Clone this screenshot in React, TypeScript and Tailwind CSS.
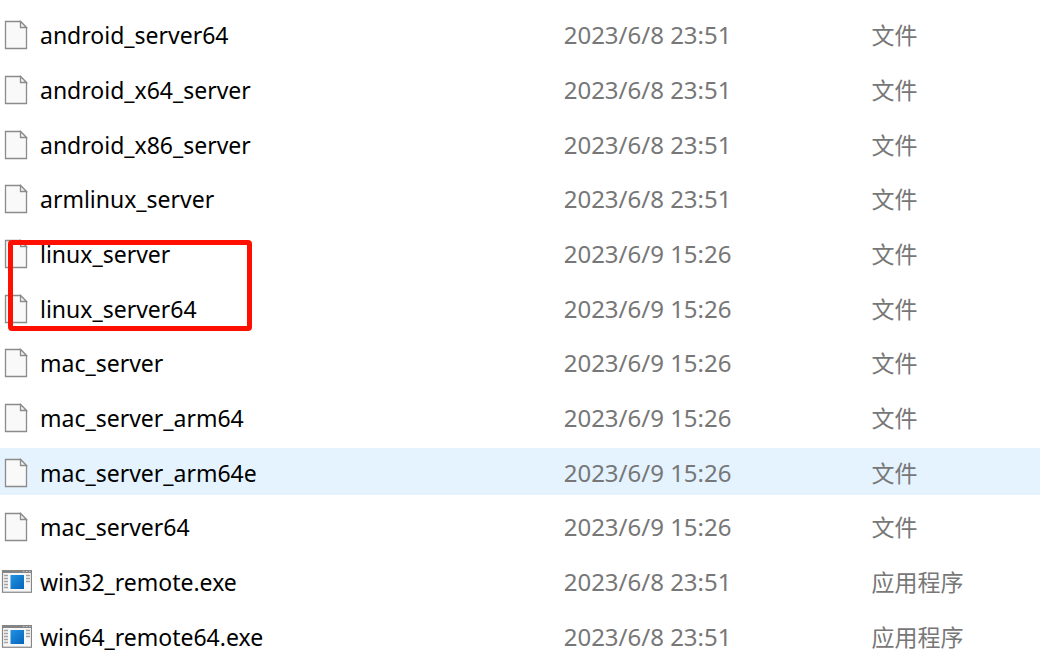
type Entry = {
  name: string;
  modified: string;
  kind: string;
  app?: boolean;
  active?: boolean;
  marked?: boolean;
};

const entries: Entry[] = [
  { name: "android_server64", modified: "2023/6/8 23:51", kind: "文件" },
  { name: "android_x64_server", modified: "2023/6/8 23:51", kind: "文件" },
  { name: "android_x86_server", modified: "2023/6/8 23:51", kind: "文件" },
  { name: "armlinux_server", modified: "2023/6/8 23:51", kind: "文件" },
  { name: "linux_server", modified: "2023/6/9 15:26", kind: "文件", marked: true },
  { name: "linux_server64", modified: "2023/6/9 15:26", kind: "文件" },
  { name: "mac_server", modified: "2023/6/9 15:26", kind: "文件" },
  { name: "mac_server_arm64", modified: "2023/6/9 15:26", kind: "文件" },
  { name: "mac_server_arm64e", modified: "2023/6/9 15:26", kind: "文件", active: true },
  { name: "mac_server64", modified: "2023/6/9 15:26", kind: "文件" },
  { name: "win32_remote.exe", modified: "2023/6/8 23:51", kind: "应用程序", app: true },
  { name: "win64_remote64.exe", modified: "2023/6/8 23:51", kind: "应用程序", app: true },
];

function FileIcon() {
  return (
    <svg width="32" height="30" viewBox="0 0 32 30" fill="none" aria-hidden="true" className="shrink-0">
      <path d="M5.5 1.5H20.5L26.5 7.5V28.5H5.5Z" fill="#f9f9f9" stroke="#8b8b89" strokeWidth="1.3" />
      <path d="M20.5 1.5V7.5H26.5Z" fill="#f4f4f4" stroke="#8b8b89" strokeWidth="1.3" />
    </svg>
  );
}

function AppIcon() {
  return (
    <svg width="32" height="30" viewBox="0 0 32 30" fill="none" aria-hidden="true" className="shrink-0">
      <defs>
        <linearGradient id="pane" x1="0" y1="0" x2="1" y2="1">
          <stop offset="0" stopColor="#2094e4" />
          <stop offset="1" stopColor="#0663ba" />
        </linearGradient>
      </defs>
      <rect x="2.5" y="3.75" width="29" height="21.5" fill="#f7f7f7" stroke="#858585" strokeWidth="1.2" />
      <path d="M2 3H32V6H2Z" fill="#858585" />
      <path d="M23 4.5H24.5M26 4.5H27.5M29 4.5H30.5" stroke="#c4c4c4" />
      <path d="M4 8.5H8M4 11.5H8M4 14.5H8M4 17.5H8M4 20.5H8M26 8.5H30M26 11.5H30M26 14.5H30" stroke="#a2a2a2" strokeWidth="1.3" />
      <rect x="10.5" y="8" width="13.5" height="14" fill="url(#pane)" />
    </svg>
  );
}

export default function App() {
  return (
    <main className="h-screen overflow-hidden bg-white pt-[3px] font-['Noto_Sans','Noto_Sans_CJK_SC',sans-serif]">
      <table className="h-[664px] w-full table-fixed border-separate border-spacing-x-0 border-spacing-y-2 text-left">
        <colgroup>
          <col className="w-[54.2%]" />
          <col className="w-[29.6%]" />
          <col />
        </colgroup>
        <tbody>
          {entries.map((entry) => (
            <tr key={entry.name} className={entry.active ? "bg-[#e5f3ff]" : ""}>
              <td className="relative p-0">
                <div className="flex items-center gap-2 pt-0.5 text-[23px] leading-6 text-black">
                  {entry.app ? <AppIcon /> : <FileIcon />}
                  <span>{entry.name}</span>
                </div>
                {entry.marked && (
                  <div className="pointer-events-none absolute top-[10px] left-2 z-10 h-[91px] w-[244px] rounded-sm border-[5px] border-[#ff0f00]" />
                )}
              </td>
              <td className="p-0 pt-0.5 text-[24px] leading-6 text-[#777]">{entry.modified}</td>
              <td className="p-0 pt-0.5 text-[23px] leading-6 text-[#777]">{entry.kind}</td>
            </tr>
          ))}
        </tbody>
      </table>
    </main>
  );
}
